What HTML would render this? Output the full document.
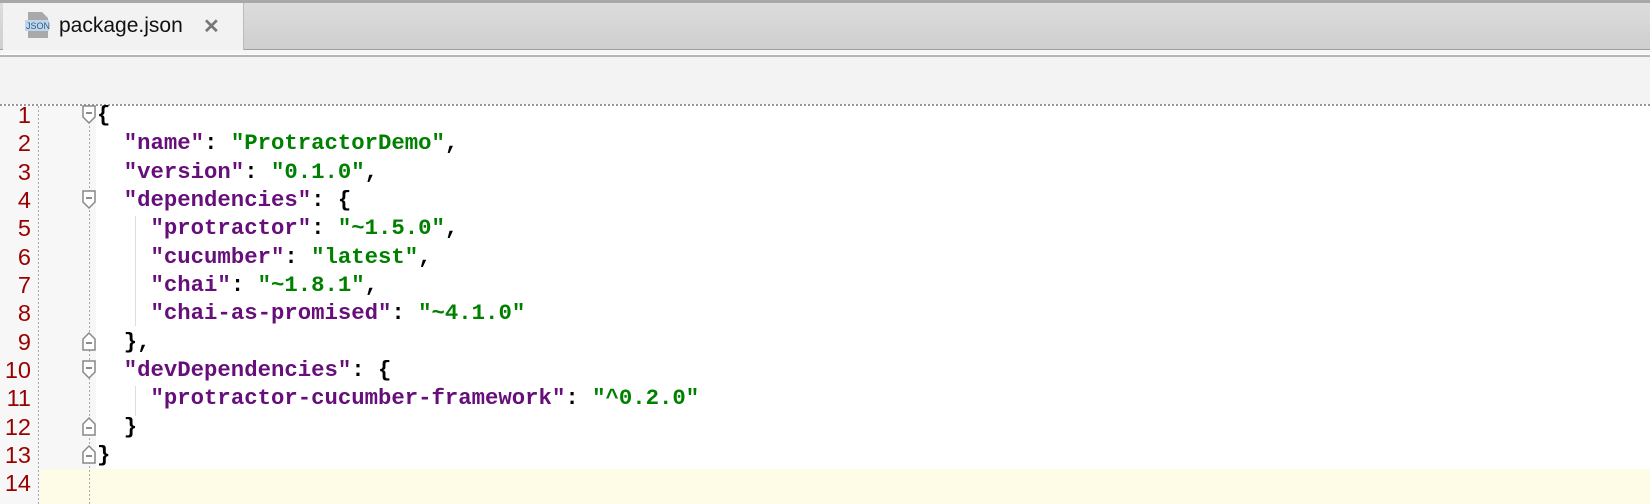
<!DOCTYPE html>
<html><head><meta charset="utf-8"><style>
body{margin:0;width:1650px;height:504px;overflow:hidden;background:#fff;position:relative;font-family:"Liberation Sans",sans-serif}
.top{position:absolute;left:0;top:0;width:1650px;height:3px;background:#a8a8a8}
.tabbar{position:absolute;left:0;top:3px;width:1650px;height:46px;background:linear-gradient(#dcdcdc,#cfcfcf);border-bottom:1px solid #a0a0a0}
.tab{position:absolute;left:3px;top:3px;width:240px;height:50px;background:#f2f2f2;border-right:1px solid #bbb}
.tab .t{position:absolute;left:56px;top:11px;font-size:21px;color:#111}
.tab .x{position:absolute;left:200px;top:11px;font-size:20px;color:#777;font-weight:bold}
.strip{position:absolute;left:0;top:50px;width:1650px;height:4px;background:#f6f6f6}
.sep{position:absolute;left:0;top:55px;width:1650px;height:2px;background:#b5b5b5}
.tool{position:absolute;left:0;top:57px;width:1650px;height:47px;background:#f3f3f3}
.dots{position:absolute;left:0;top:104px;width:1650px;height:2px;background:repeating-linear-gradient(90deg,#999 0 2px,transparent 2px 4px)}
.gutter{position:absolute;left:0;top:106px;width:96px;height:398px;background:#f7f7f7}
.gl{position:absolute;left:38px;top:106px;width:1px;height:398px;background:repeating-linear-gradient(#aaa 0 2px,transparent 2px 4px)}
.fl{position:absolute;left:89px;top:126px;width:1px;height:378px;background:repeating-linear-gradient(#aaa 0 2px,transparent 2px 4px)}
.cur{position:absolute;left:40px;top:469px;width:1610px;height:35px;background:#fefce6}
.nums{position:absolute;left:0;top:101px;width:31px;text-align:right;font-size:23.5px;line-height:28.33px;color:#990000}
.code{position:absolute;left:97px;top:101px;font-family:"Liberation Mono",monospace;font-weight:bold;font-size:22.3px;line-height:28.33px;color:#000;white-space:pre}
.k{color:#660e7a}.s{color:#008000}
.ig{position:absolute;width:1px;background:#ddd}
svg.f{position:absolute;left:81px}
</style></head><body>
<div class="top"></div><div class="tabbar"></div>
<div class="tab"><svg style="position:absolute;left:22px;top:8px" width="26" height="28"><path d="M3 1h14l6 6v20H3z" fill="#a9a9a9"/><rect x="0" y="9" width="24" height="11" fill="#bcd6ee"/><text x="1" y="18" font-size="9" font-family="Liberation Sans" fill="#3a5a80">JSON</text></svg><span class="t">package.json</span><span class="x">✕</span></div>
<div class="strip"></div><div class="sep"></div><div class="tool"></div><div class="dots"></div>
<div class="gutter"></div><div class="cur"></div><div class="gl"></div><div class="fl"></div>
<div class="ig" style="left:135px;top:216px;height:110px"></div>
<div class="ig" style="left:135px;top:386px;height:30px"></div>
<svg class="f" style="top:104px" width="16" height="22"><path d="M2 2h12v11l-6 6-6-6z" fill="#fff" stroke="#888" stroke-width="1.5"/><path d="M5 9h6" stroke="#666" stroke-width="1.5"/></svg>
<svg class="f" style="top:189px" width="16" height="22"><path d="M2 2h12v11l-6 6-6-6z" fill="#fff" stroke="#888" stroke-width="1.5"/><path d="M5 9h6" stroke="#666" stroke-width="1.5"/></svg>
<svg class="f" style="top:359px" width="16" height="22"><path d="M2 2h12v11l-6 6-6-6z" fill="#fff" stroke="#888" stroke-width="1.5"/><path d="M5 9h6" stroke="#666" stroke-width="1.5"/></svg>
<svg class="f" style="top:330px" width="16" height="22"><path d="M2 20h12V9L8 3 2 9z" fill="#fff" stroke="#888" stroke-width="1.5"/><path d="M5 13h6" stroke="#666" stroke-width="1.5"/></svg>
<svg class="f" style="top:415px" width="16" height="22"><path d="M2 20h12V9L8 3 2 9z" fill="#fff" stroke="#888" stroke-width="1.5"/><path d="M5 13h6" stroke="#666" stroke-width="1.5"/></svg>
<svg class="f" style="top:443px" width="16" height="22"><path d="M2 20h12V9L8 3 2 9z" fill="#fff" stroke="#888" stroke-width="1.5"/><path d="M5 13h6" stroke="#666" stroke-width="1.5"/></svg>
<div class="nums">1<br>2<br>3<br>4<br>5<br>6<br>7<br>8<br>9<br>10<br>11<br>12<br>13<br>14</div>
<div class="code">{
  <span class="k">"name"</span>: <span class="s">"ProtractorDemo"</span>,
  <span class="k">"version"</span>: <span class="s">"0.1.0"</span>,
  <span class="k">"dependencies"</span>: {
    <span class="k">"protractor"</span>: <span class="s">"~1.5.0"</span>,
    <span class="k">"cucumber"</span>: <span class="s">"latest"</span>,
    <span class="k">"chai"</span>: <span class="s">"~1.8.1"</span>,
    <span class="k">"chai-as-promised"</span>: <span class="s">"~4.1.0"</span>
  },
  <span class="k">"devDependencies"</span>: {
    <span class="k">"protractor-cucumber-framework"</span>: <span class="s">"^0.2.0"</span>
  }
}</div>
</body></html>
